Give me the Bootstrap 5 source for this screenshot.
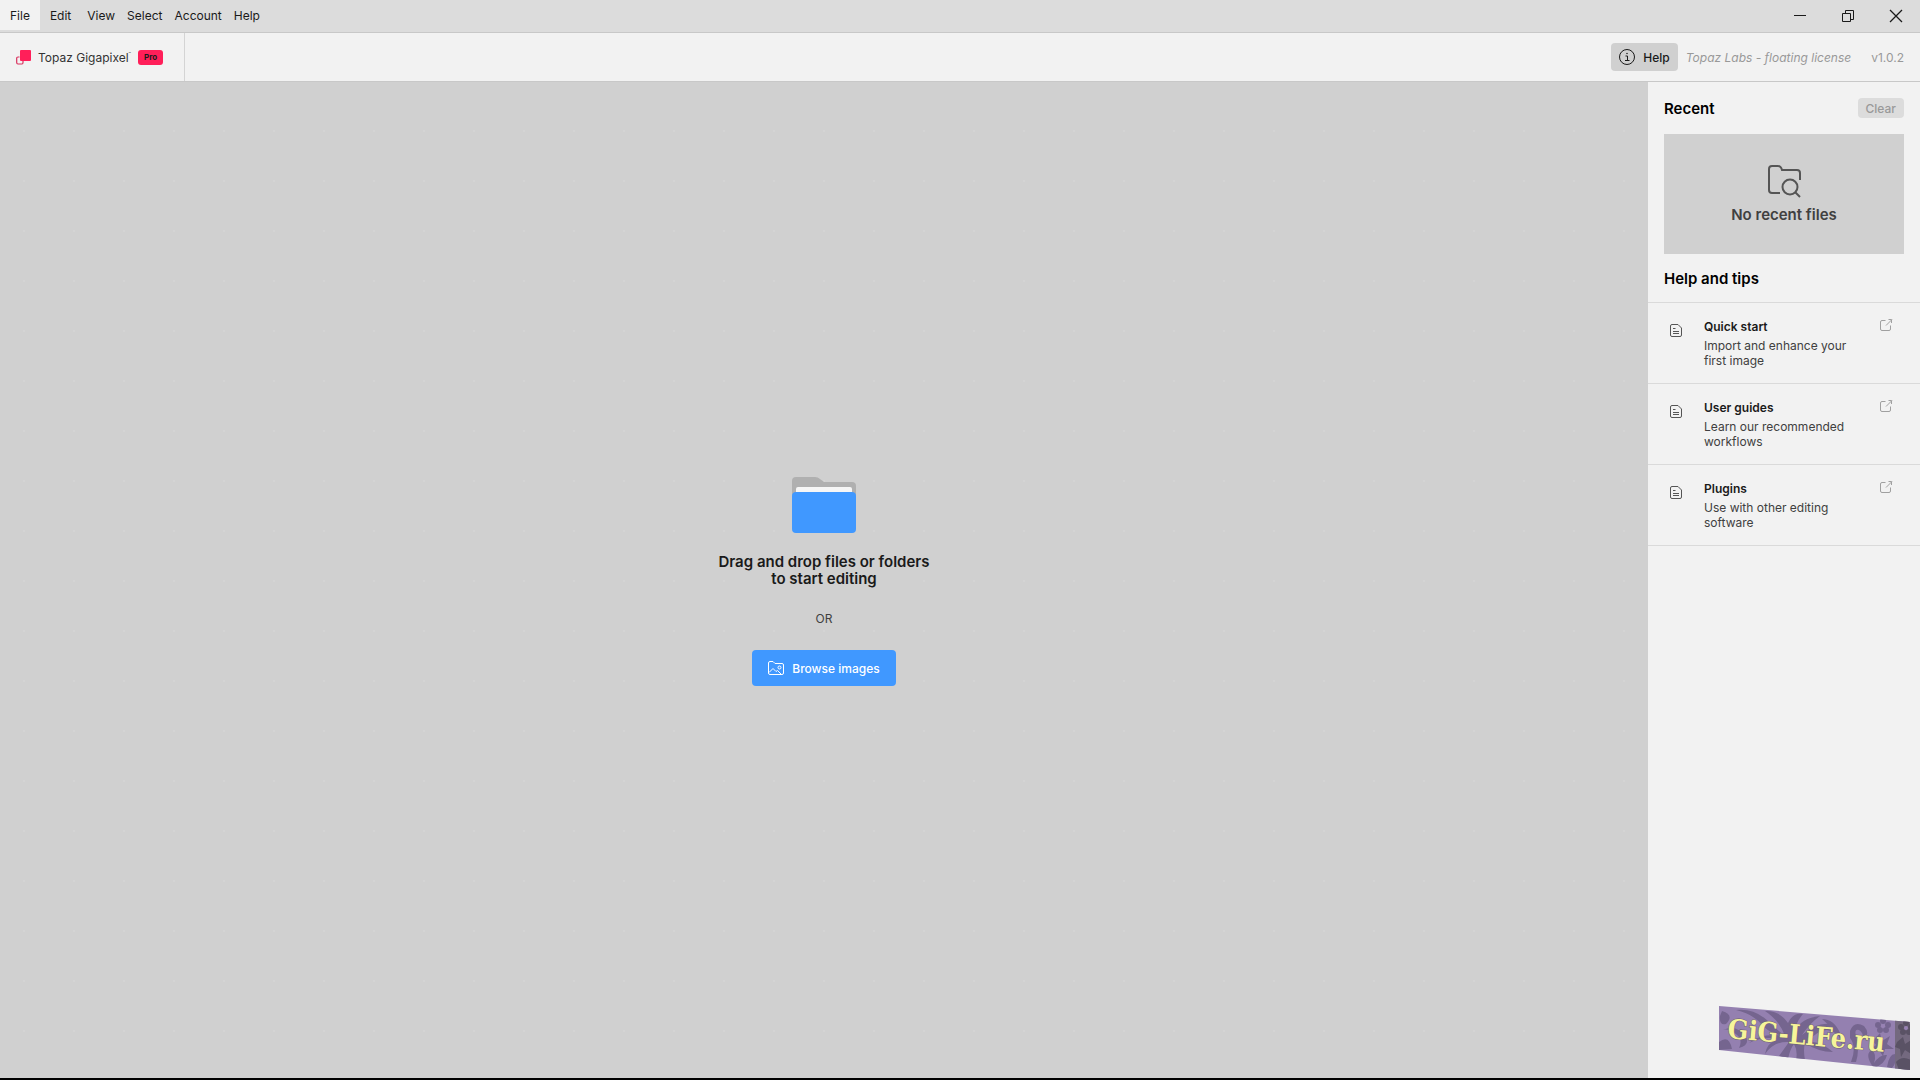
<!DOCTYPE html>
<html lang="en">
<head>
<meta charset="utf-8">
<meta name="viewport" content="width=device-width, initial-scale=1">
<title>Topaz Gigapixel</title>
<link href="https://cdn.jsdelivr.net/npm/bootstrap@5.3.0/dist/css/bootstrap.min.css" rel="stylesheet">
<style>
  body { font-family: Inter, "Liberation Sans", sans-serif; font-size: 12px; line-height: 15px; color: #1a1a1a; background: #000; }
  svg { display: block; flex: none; }
  .app-shell { height: 100vh; border-bottom: 2px solid #000; background: #f2f2f2; }
  .menu-strip { background: #dcdcdc; border-bottom: 1px solid #c8c8c8; height: 33px; }
  .menu-strip a { color: #1a1a1a; text-decoration: none; padding: 8px 6px 7px; }
  .menu-strip a.menu-open { background: #f2f2f2; padding-left: 10px; padding-right: 10px; margin-right: 4px; }
  .win-btn { border: 0; background: none; padding: 0; width: 48px; height: 32px; display: flex; align-items: center; justify-content: center; color: #1a1a1a; }
  .tool-strip { height: 49px; border-bottom: 1px solid #c8c8c8; }
  .brand-cell { border-right: 1px solid #d4d4d4; padding: 0 21px 0 16px; }
  .brand-name { color: #333; margin: 0 7px; }
  .brand-name sup { font-size: 4px; top: -7px; }
  .pro-tag { background: #ff1f59; color: #1a1a1a; font-size: 8px; font-weight: 700; line-height: 15px; border-radius: 3px; width: 25px; text-align: center; }
  .help-btn { background: #d0d0d0; border: 0; border-radius: 4px; height: 28px; padding: 0 8px; font-weight: 500; color: #1a1a1a; }
  .dim-text { color: #999; }
  .license-note { margin: 0 16px 0 8px; }
  .drop-zone { background-color: #d0d0d0; background-image: radial-gradient(circle at 24px 49px, #d4d4d4 0, #d4d4d4 1px, transparent 1px); background-size: 50px 50px; padding-top: 3px; }
  .drop-title { font-size: 15px; line-height: 17px; font-weight: 600; margin: 20px 0 24px; }
  .or-line { color: #404040; }
  .browse-btn { background: #4098ff; color: #fff; border: 0; border-radius: 4px; height: 36px; padding: 0 16px; font-weight: 500; margin-top: 24px; }
  .side-panel { width: 272px; }
  .side-title { font-size: 15px; line-height: 17px; font-weight: 600; color: #000; margin: 0; }
  .clear-btn { background: #dcdcdc; color: #999; border: 0; border-radius: 4px; height: 20px; padding: 0 8px; font-weight: 500; }
  .recent-box { background: #d0d0d0; height: 120px; color: #404040; font-size: 15px; line-height: 17px; font-weight: 600; margin: 16px; }
  .tip-link { color: #404040; text-decoration: none; border-top: 1px solid #dadada; height: 81px; padding: 16px 27px 0 22px; }
  .tip-list { border-bottom: 1px solid #dadada; margin-top: 15px; }
  .tip-name { color: #1a1a1a; font-weight: 600; margin-bottom: 4px; }
  .tip-copy { width: 150px; margin-left: 22px; }
  .tip-icon { margin-top: 5px; }
  .site-mark { position: absolute; right: 9px; bottom: 8px; }
</style>
<script src="https://cdn.jsdelivr.net/npm/bootstrap@5.3.0/dist/js/bootstrap.bundle.min.js"></script>
</head>
<body>
<svg width="0" height="0" class="position-absolute" aria-hidden="true">
  <symbol id="doc" viewBox="0 0 12 13"><path d="M.5 2Q.5.500 2 .5H8L11.500 4V11Q11.500 12.500 10 12.500H2Q.5 12.500.5 11Z" fill="none" stroke="#555"/><path d="M3 4.500H5.500M3 7.500H9M3 9.500H9" stroke="#555"/></symbol>
  <symbol id="ext" viewBox="0 0 13 13"><path d="M5.500 1.500H2Q.5 1.500.5 3V10Q.5 11.500 2 11.500H9Q10.500 11.500 10.500 10V6.500M6 6.500L12 .5M8.500 .5H11.500V4" fill="none" stroke="#a0a0a0"/></symbol>
</svg>
<div class="app-shell d-flex flex-column position-relative overflow-hidden">
  <header>
    <div class="menu-strip d-flex justify-content-between">
      <nav class="d-flex align-items-start" aria-label="Menu">
        <a href="#" class="menu-open">File</a><a href="#">Edit</a><a href="#" class="ms-1">View</a><a href="#">Select</a><a href="#">Account</a><a href="#">Help</a>
      </nav>
      <div class="d-flex">
        <button class="win-btn" aria-label="Minimize"><svg width="14" height="14"><path d="M1 6.500H13" stroke="#1a1a1a"/></svg></button>
        <button class="win-btn" aria-label="Restore"><svg width="14" height="14" fill="none" stroke="#1a1a1a"><path d="M1.500 4.500H9.500V12.500H1.500ZM4.500 4V1.500H12.500V10.500H10"/></svg></button>
        <button class="win-btn" aria-label="Close"><svg width="14" height="14"><path d="M1 1L13 13M13 1L1 13" stroke="#1a1a1a" stroke-width="1.300"/></svg></button>
      </div>
    </div>
    <div class="tool-strip d-flex justify-content-between">
      <div class="brand-cell d-flex align-items-center">
        <svg width="15" height="15"><path d="M3.500 7H2Q.7 7 .7 8V12.500Q.7 14 2 14H6Q7 14 7 12.500V11" fill="none" stroke="#d92f5c" stroke-width="1.200"/><rect x="4" y="0" width="11" height="11" rx="1" fill="#ff1f59"/></svg>
        <span class="brand-name">Topaz Gigapixel<sup>™</sup></span>
        <span class="pro-tag">Pro</span>
      </div>
      <div class="d-flex align-items-center pe-3">
        <button class="help-btn d-flex align-items-center gap-2">
          <svg width="16" height="16" fill="none" stroke="#1a1a1a"><circle cx="8" cy="8" r="7.500"/><path d="M6.500 7H8.500V11.500M6 11.500H10.500"/><circle cx="8" cy="4.500" r=".5" fill="#1a1a1a" stroke-width=".5"/></svg>Help
        </button>
        <em class="dim-text license-note">Topaz Labs - floating license</em>
        <span class="dim-text ms-1">v1.0.2</span>
      </div>
    </div>
  </header>
  <div class="d-flex flex-grow-1">
    <main class="drop-zone flex-grow-1 d-flex flex-column align-items-center justify-content-center text-center">
      <svg width="64" height="56"><path d="M0 4Q0 0 4 0H23Q26 0 28 2L32 5H60Q64 5 64 9V20H0Z" fill="#b0b0b0"/><rect x="4" y="10" width="56" height="10" rx="2" fill="#f6f6f6"/><rect y="15" width="64" height="41" rx="4" fill="#4098ff"/></svg>
      <h1 class="drop-title">Drag and drop files or folders<br>to start editing</h1>
      <div class="or-line">OR</div>
      <button class="browse-btn d-flex align-items-center gap-2">
        <svg width="16" height="14" fill="none" stroke="#fff"><path d="M.5 2Q.5.500 2 .5H5L7 2.500H14Q15.500 2.500 15.500 4V12Q15.500 13.500 14 13.500H2Q.5 13.500.5 12ZM1 11.500L5 7.500 8 10.500 9.500 9.500 13 13"/><circle cx="11.500" cy="6.500" r="1.500"/></svg>Browse images
      </button>
    </main>
    <aside class="side-panel flex-shrink-0">
      <div class="d-flex justify-content-between align-items-center px-3 pt-3">
        <h2 class="side-title">Recent</h2>
        <button class="clear-btn">Clear</button>
      </div>
      <div class="recent-box d-flex flex-column align-items-center justify-content-center">
        <svg width="33" height="33" class="mb-2" fill="none" stroke="#555" stroke-width="2"><path d="M12 28H4Q1 28 1 25V4Q1 1 4 1H10Q13 1 14 5H29Q32 5 32 8V15"/><circle cx="22" cy="22" r="7.500"/><path d="M27.500 27.500L32 32"/></svg>
        No recent files
      </div>
      <h2 class="side-title px-3">Help and tips</h2>
      <div class="tip-list">
        <a href="#" class="tip-link d-flex align-items-start"><svg width="12" height="13" class="tip-icon"><use href="#doc"/></svg><span class="tip-copy"><span class="tip-name d-block">Quick start</span>Import and enhance your first image</span><svg width="13" height="13" class="ms-auto"><use href="#ext"/></svg></a>
        <a href="#" class="tip-link d-flex align-items-start"><svg width="12" height="13" class="tip-icon"><use href="#doc"/></svg><span class="tip-copy"><span class="tip-name d-block">User guides</span>Learn our recommended workflows</span><svg width="13" height="13" class="ms-auto"><use href="#ext"/></svg></a>
        <a href="#" class="tip-link d-flex align-items-start"><svg width="12" height="13" class="tip-icon"><use href="#doc"/></svg><span class="tip-copy"><span class="tip-name d-block">Plugins</span>Use with other editing software</span><svg width="13" height="13" class="ms-auto"><use href="#ext"/></svg></a>
      </div>
    </aside>
  </div>
  <svg class="site-mark" width="192" height="64" viewBox="0 0 192 64">
    <defs>
      <clipPath id="banner"><path d="M0 0L191 16V64L0 44Z"/></clipPath>
      <g id="bloom"><circle cx="0" cy="-5" r="3"/><circle cx="5" cy="-1" r="3"/><circle cx="3" cy="4" r="3"/><circle cx="-3" cy="4" r="3"/><circle cx="-5" cy="-1" r="3"/><circle r="2" fill="#9882b4"/></g>
    </defs>
    <g clip-path="url(#banner)">
      <path d="M0 0H192V64H0Z" fill="#9480b0"/>
      <g fill="#75658f">
        <path d="M17 4Q35 2 49 15Q58 24 66 30Q54 29 45 21Q35 8 17 4ZM66 30Q61 15 46 5Q60 4 69 17Q74 6 84 8Q77 16 76 25Q82 12 101 10Q91 17 83 29Q98 16 111 18Q121 23 124 35Q117 25 108 24Q99 24 88 36Q100 34 114 46Q99 46 86 37Q84 43 86 54H77Q79 45 75 38Q71 43 69 53L60 50Q65 43 70 36Q55 35 46 48Q48 37 58 33Q45 30 30 37Q43 26 66 30Z"/>
        <path d="M3 5Q16 9 7 18Q0 20 1 10ZM4 24Q18 18 27 31Q31 39 20 42Q24 34 18 29Q10 22 4 24ZM0 36Q10 28 13 43L0 44ZM131 25Q135 14 145 20Q152 28 144 34Q145 27 140 24Q135 22 137 31Q141 43 137 56H132Q138 41 131 32Z"/>
        <path d="M103 13Q115 13 121 27Q127 32 122 38Q121 28 113 22ZM152 58Q146 47 153 44Q158 48 155 57Q161 48 168 49Q166 58 155 62ZM168 61Q170 48 176 48Q179 55 173 62ZM154 35L161 27 163 35 171 30 168 38 175 43 166 43 164 50 159 43 151 44 157 39Z"/>
        <use href="#bloom" x="164" y="20"/>
      </g>
      <path d="M176 0H192V64H176Z" fill="#74697f"/>
      <g fill="#5a5265"><use href="#bloom" x="187" y="22"/><path d="M178 36L184 31 186 38 192 34V48L186 44 182 51 181 43 176 41ZM177 56Q183 49 192 54V64H180Z"/></g>
    </g>
    <text x="8" y="32" transform="rotate(5 8 32)" font-family="'DejaVu Serif Condensed', 'Liberation Serif', serif" font-weight="700" font-size="27" fill="#f6f49a" stroke="#6e6070" stroke-width="1" paint-order="stroke">GiG-LiFe.ru</text>
  </svg>
</div>
</body>
</html>
